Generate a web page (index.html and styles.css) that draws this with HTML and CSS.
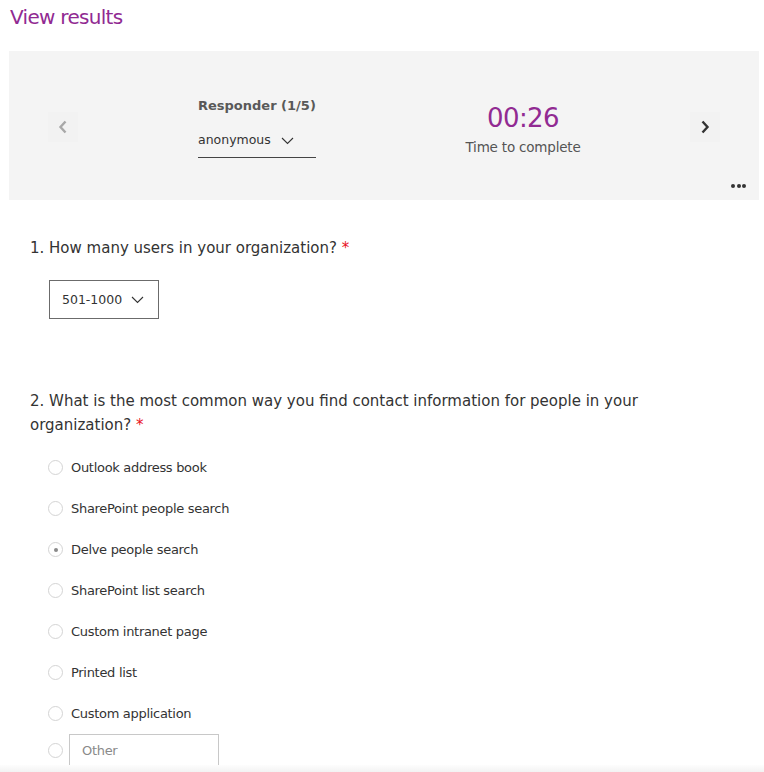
FILE: index.html
```html
<!DOCTYPE html>
<html lang="en">

<head>
    <meta charset="UTF-8">
    <meta name="viewport" content="width=device-width, initial-scale=1.0">
    <title>View results</title>
    <link rel="stylesheet" href="styles.css">
</head>

<body>
    <h1 class="page-title">View results</h1>

    <!-- Responder navigation panel -->
    <section class="responder-panel">
        <button class="nav-btn nav-prev" aria-label="Previous">
            <svg width="12" height="14" viewBox="0 0 12 14"><polyline points="8.5,1.5 3.5,7 8.5,12.5" fill="none" stroke="#a8a8a8" stroke-width="2.4" /></svg>
        </button>
        <div class="responder">
            <div class="responder-label">Responder (1/5)</div>
            <div class="responder-select">
                <span>anonymous</span>
                <svg width="13" height="8" viewBox="0 0 13 8"><polyline points="1,1 6.5,6.5 12,1" fill="none" stroke="#333" stroke-width="1.1" /></svg>
            </div>
        </div>
        <div class="timer">
            <div class="timer-value">00:26</div>
            <div class="timer-label">Time to complete</div>
        </div>
        <button class="nav-btn nav-next" aria-label="Next">
            <svg width="12" height="14" viewBox="0 0 12 14"><polyline points="3.5,1.5 8.5,7 3.5,12.5" fill="none" stroke="#333" stroke-width="2.4" /></svg>
        </button>
        <div class="more-menu"><span></span><span></span><span></span></div>
    </section>

    <!-- Questions -->
    <main class="questions">
        <div class="question q-dropdown">
            <div class="question-title">1. How many users in your organization? <span class="required">*</span></div>
            <div class="dropdown">
                <span>501-1000</span>
                <svg width="13" height="8" viewBox="0 0 13 8"><polyline points="1,1 6.5,6.5 12,1" fill="none" stroke="#333" stroke-width="1.1" /></svg>
            </div>
        </div>

        <div class="question q-choice">
            <div class="question-title">2. What is the most common way you find contact information for people in your organization? <span class="required">*</span></div>
            <div class="options">
                <div class="option"><span class="radio"></span>Outlook address book</div>
                <div class="option"><span class="radio"></span>SharePoint people search</div>
                <div class="option"><span class="radio checked"></span>Delve people search</div>
                <div class="option"><span class="radio"></span>SharePoint list search</div>
                <div class="option"><span class="radio"></span>Custom intranet page</div>
                <div class="option"><span class="radio"></span>Printed list</div>
                <div class="option"><span class="radio"></span>Custom application</div>
                <div class="option option-other"><span class="radio"></span><div class="other-input">Other</div></div>
            </div>
        </div>
    </main>

    <div class="bottom-fade"></div>
</body>

</html>
```

FILE: styles.css
```css
* {
    box-sizing: border-box;
}

body {
    margin: 0;
    padding: 0;
    background: #ffffff;
    color: #333333;
    font-family: 'DejaVu Sans', Verdana, sans-serif;
    width: 764px;
    height: 772px;
    overflow: hidden;
}

.page-title {
    margin: 0;
    padding: 5px 10px 0 10px;
    height: 51px;
    font-size: 20px;
    letter-spacing: -0.7px;
    font-weight: normal;
    color: #912a92;
}

/* Responder panel */
.responder-panel {
    position: relative;
    margin: 0 5px 0 9px;
    height: 149px;
    background: #f4f4f4;
    display: flex;
    align-items: center;
    padding-left: 39px;
}

.nav-btn {
    width: 30px;
    height: 30px;
    margin-top: 3px;
    padding: 0;
    border: none;
    background: #f2f2f2;
    display: flex;
    align-items: center;
    justify-content: center;
}

.responder {
    margin-left: 120px;
    width: 118px;
    margin-top: 4px;
}

.responder-label {
    font-size: 13px;
    font-weight: bold;
    color: #595959;
    white-space: nowrap;
}

.responder-select {
    margin-top: 19px;
    height: 26px;
    border-bottom: 1px solid #444;
    display: flex;
    align-items: flex-start;
    gap: 10px;
    font-size: 12.5px;
    color: #333;
}

.responder-select svg {
    margin-top: 5px;
}

.timer {
    width: 160px;
    margin-left: 127px;
    text-align: center;
    margin-top: 5px;
}

.timer-value {
    font-size: 26px;
    letter-spacing: -0.6px;
    color: #912a92;
    line-height: 34px;
}

.timer-label {
    font-size: 13.5px;
    letter-spacing: -0.2px;
    color: #555;
    margin-top: 4px;
}

.nav-next {
    margin-left: 87px;
}

.more-menu {
    position: absolute;
    right: 13px;
    bottom: 12px;
    display: flex;
    gap: 1.5px;
}

.more-menu span {
    width: 4px;
    height: 4px;
    border-radius: 50%;
    background: #333;
}

/* Questions */
.questions {
    padding: 36px 20px 0 30px;
}

.question-title {
    font-size: 15px;
    line-height: 24px;
    color: #333;
}

.required {
    color: #e81123;
}

.q-dropdown .dropdown {
    margin: 20px 0 0 19px;
    width: 110px;
    height: 39px;
    border: 1px solid #6b6b6b;
    display: flex;
    align-items: center;
    gap: 9px;
    padding-left: 12px;
    font-size: 12.5px;
    color: #333;
}

.q-choice {
    margin-top: 70px;
    width: 620px;
}

.options {
    margin-top: 10px;
    padding-left: 18px;
}

.option {
    height: 41px;
    display: flex;
    align-items: center;
    font-size: 13px;
    letter-spacing: -0.3px;
    color: #333;
}

.radio {
    width: 15px;
    height: 15px;
    border: 1px solid #d4d4d4;
    border-radius: 50%;
    background: #fff;
    margin-right: 8px;
    display: flex;
    align-items: center;
    justify-content: center;
}

.radio.checked::after {
    content: "";
    width: 4px;
    height: 4px;
    border-radius: 50%;
    background: #8a8a8a;
}

.option-other {
    height: 32px;
}

.option-other .radio {
    margin-right: 6px;
}

.other-input {
    width: 150px;
    height: 32px;
    border: 1px solid #c8c8c8;
    padding-left: 12px;
    display: flex;
    align-items: center;
    color: #8a8a8a;
    font-size: 13px;
    letter-spacing: -0.3px;
}

.bottom-fade {
    position: fixed;
    left: 0;
    right: 0;
    bottom: 0;
    height: 7px;
    background: linear-gradient(#fdfdfd, #f3f3f3);
}
```
